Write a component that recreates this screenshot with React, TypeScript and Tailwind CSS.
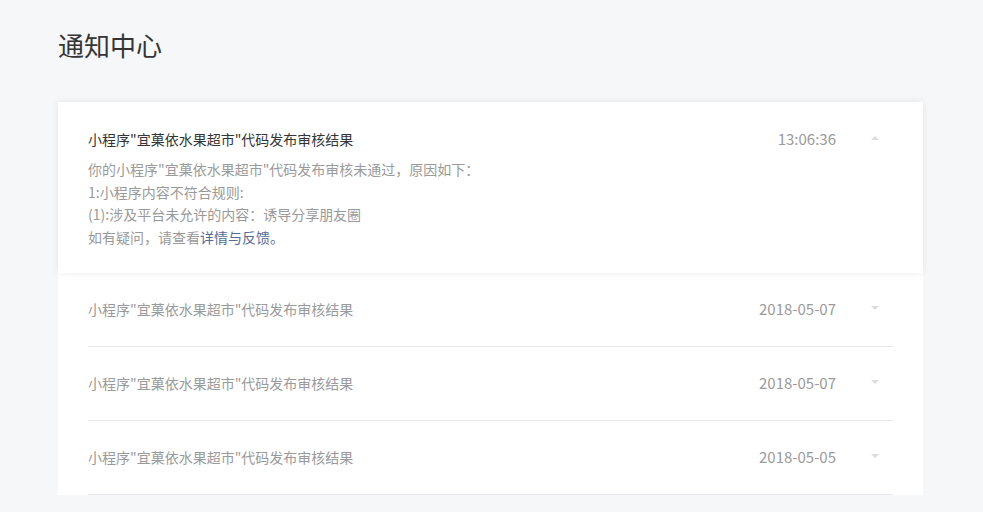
import type { FC } from 'react';

interface Notice {
  id: number;
  title: string;
  time: string;
}

const notices: Notice[] = [
  { id: 2, title: '小程序"宜菓依水果超市"代码发布审核结果', time: '2018-05-07' },
  { id: 3, title: '小程序"宜菓依水果超市"代码发布审核结果', time: '2018-05-07' },
  { id: 4, title: '小程序"宜菓依水果超市"代码发布审核结果', time: '2018-05-05' },
];

const Caret: FC<{ up?: boolean }> = ({ up }) => (
  <span className="ml-[35px] mr-[14px] w-[8px] flex justify-center">
    <span
      className={
        up
          ? 'w-0 h-0 border-l-[4px] border-r-[4px] border-b-[4px] border-l-transparent border-r-transparent border-b-[#dcdcdc] mb-[2px]'
          : 'w-0 h-0 border-l-[4px] border-r-[4px] border-t-[4px] border-l-transparent border-r-transparent border-t-[#dcdcdc] mb-[4px]'
      }
    />
  </span>
);

const App: FC = () => {
  return (
    <div
      className="min-h-[512px] bg-[#f6f7f9] px-[58px] pt-[27px]"
      style={{ fontFamily: '"Noto Sans CJK SC", "Noto Sans", sans-serif' }}
    >
      <h1 className="text-[26px] leading-[36px] text-[#353535] font-normal">通知中心</h1>

      <div className="mt-[39px] w-[865px] bg-white">
        {/* expanded item */}
        <div className="h-[171px] px-[30px] pt-[26px] bg-white shadow-[0_0_8px_rgba(0,0,0,0.08)] relative">
          <div className="flex items-center h-[22px]">
            <span className="flex-1 text-[14px] text-[#353535]">小程序"宜菓依水果超市"代码发布审核结果</span>
            <span className="text-[15px] text-[#9a9a9a]">13:06:36</span>
            <Caret up />
          </div>
          <div className="mt-[8px] text-[14px] leading-[22.5px] text-[#9a9a9a]">
            <p>你的小程序"宜菓依水果超市"代码发布审核未通过，原因如下：</p>
            <p>1:小程序内容不符合规则:</p>
            <p>(1):涉及平台未允许的内容：诱导分享朋友圈</p>
            <p>
              如有疑问，请查看<a className="text-[#576b95]">详情与反馈。</a>
            </p>
          </div>
        </div>

        {/* collapsed items */}
        <div className="px-[30px]">
          {notices.map((n) => (
            <div key={n.id} className="h-[74px] flex items-center border-b border-[#e7e7eb]">
              <span className="flex-1 text-[14px] text-[#9a9a9a]">{n.title}</span>
              <span className="text-[15px] text-[#9a9a9a]">{n.time}</span>
              <Caret />
            </div>
          ))}
        </div>
      </div>
    </div>
  );
};

export default App;
